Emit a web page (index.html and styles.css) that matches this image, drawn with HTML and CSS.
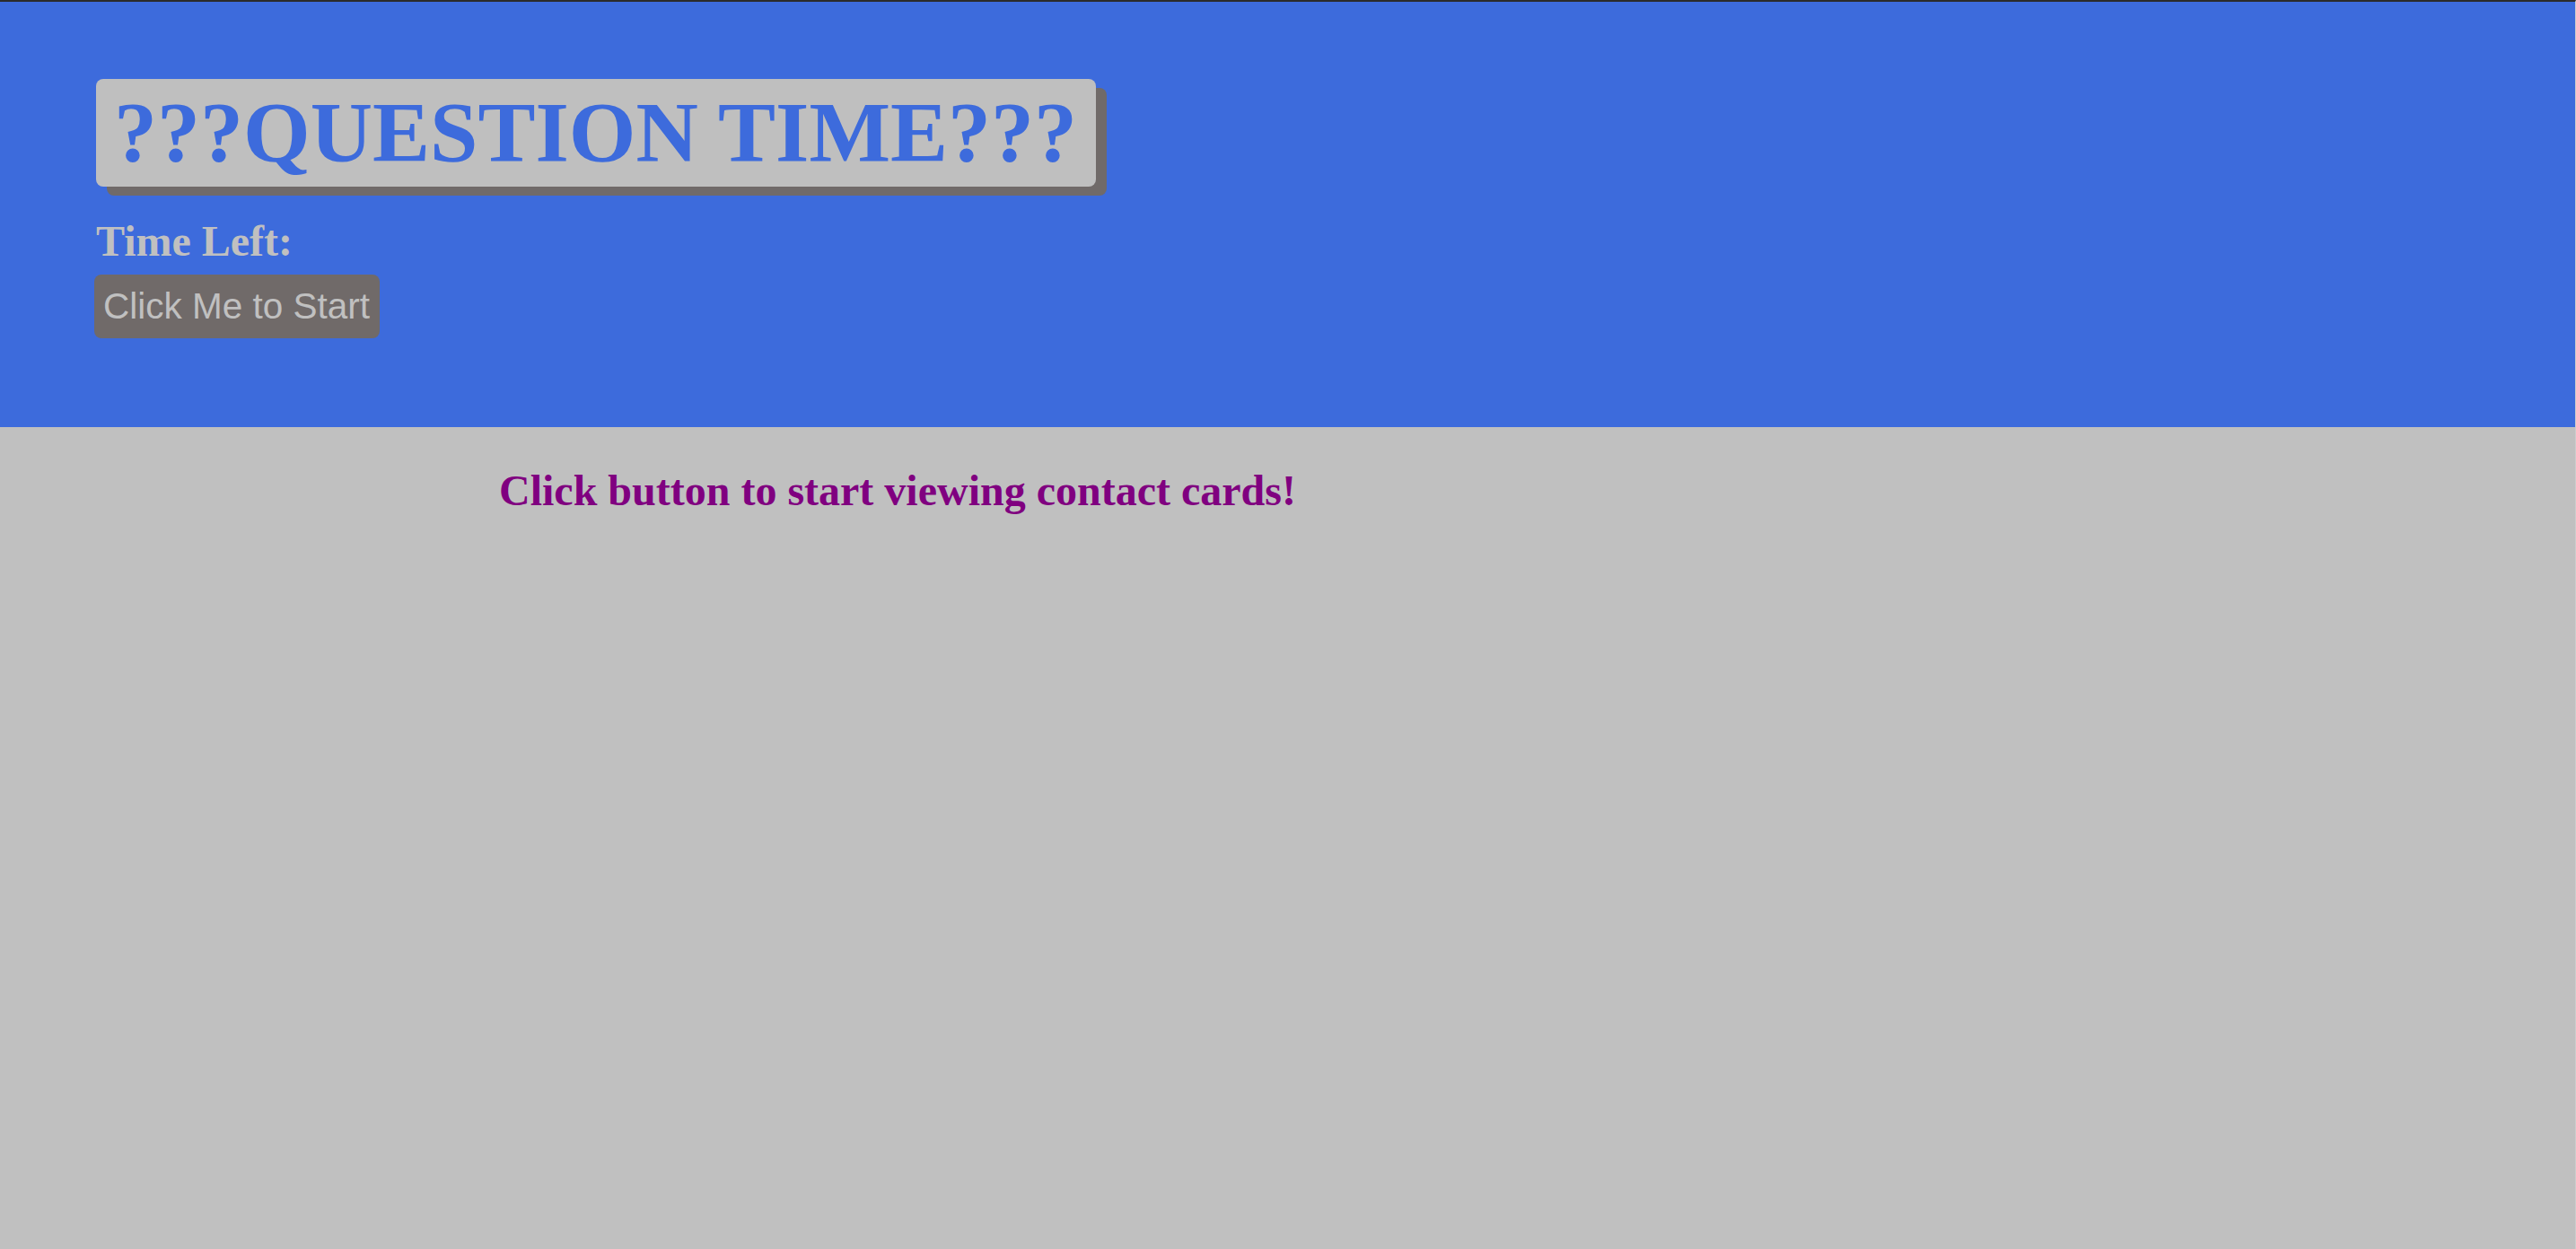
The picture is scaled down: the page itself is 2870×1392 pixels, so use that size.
FILE: index.html
```html
<!DOCTYPE html>
<html>
<head>
<meta charset="utf-8">
<title>Question Time</title>
<link rel="stylesheet" href="styles.css">
</head>
<body>
<div class="page">
  <header class="header">
    <h1 class="title">???QUESTION TIME???</h1>
    <h2 class="timer">Time Left:</h2>
    <button class="start">Click Me to Start</button>
  </header>
  <main class="content">
    <h2 class="prompt">Click button to start viewing contact cards!</h2>
  </main>
</div>
</body>
</html>
```
FILE: styles.css
```css
html, body {
  margin: 0;
  padding: 0;
  height: 100%;
  background: #c0c0c0;
}
.page {
  min-height: 100%;
  box-sizing: border-box;
  border-top: 2px solid #2b2b2b;
  border-right: 1px solid #cdcdcd;
  display: flex;
  flex-direction: column;
  font-family: "Liberation Serif", "Times New Roman", serif;
}
.header {
  background: #3d6bdc;
  height: 474px;
  box-sizing: border-box;
  padding: 86px 0 0 107px;
  display: flex;
  flex-direction: column;
  align-items: flex-start;
}
.title {
  margin: 0;
  background: #bfbfbf;
  color: #3d6bdc;
  font-size: 96px;
  font-weight: bold;
  line-height: 110px;
  padding: 5px 21px 5px 20px;
  border-radius: 8px;
  box-shadow: 12px 10px 0 #706a69;
}
.timer {
  margin: 33px 0 0 0;
  color: #c0c0c0;
  font-size: 48px;
  line-height: 55px;
  font-weight: bold;
}
.start {
  margin: 10px 0 0 -2px;
  background: #706a69;
  color: #c0c0c0;
  border: none;
  border-radius: 8px;
  font-family: "Liberation Sans", Arial, sans-serif;
  font-size: 40.5px;
  line-height: 46px;
  padding: 12px 11px 13px 10px;
  width: 318px;
  text-align: left;
  white-space: nowrap;
}
.content {
  flex: 1;
  background: #c0c0c0;
  padding: 43px 0 0 556px;
}
.prompt {
  margin: 0;
  color: #800080;
  font-size: 48px;
  line-height: 55px;
  font-weight: bold;
}
```
